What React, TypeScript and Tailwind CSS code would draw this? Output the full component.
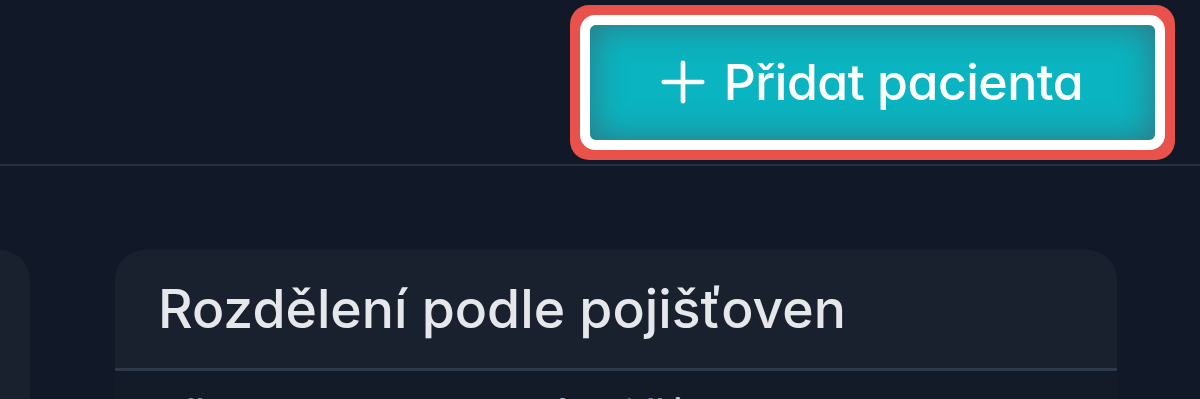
import { Plus } from "lucide-react";

const font = "font-['Inter','Noto_Sans',sans-serif] [font-feature-settings:'cv11']";

export default function App() {
  return (
    <div className={`h-[399px] w-[1200px] overflow-hidden bg-[#111827] ${font}`}>
      {/* Header */}
      <header className="flex h-[166px] items-center justify-end border-b-2 border-[#263041] pr-[45px]">
        <button className="flex h-[115px] w-[565px] items-center justify-center gap-[8px] rounded-[6px] bg-[#0ab4c0] text-white shadow-[inset_0_0_34px_rgba(55,105,115,0.85),0_0_0_10px_#ffffff,0_0_0_20px_#e8524a]">
          <Plus className="-ml-[12px] h-[66px] w-[66px]" strokeWidth={1.7} />
          <span className="text-[50px] font-medium leading-none tracking-[-0.01em]">Přidat pacienta</span>
        </button>
      </header>

      {/* Content */}
      <main className="-ml-[370px] grid grid-cols-[400px_1002px] gap-[85px] pt-[84px]">
        <div className="h-[400px] rounded-[30px] bg-[#19212f]" />
        <section className="rounded-[30px] bg-[#19212f]">
          <div className="flex h-[121px] items-center border-b-[3px] border-[#2e3949] px-[43px]">
            <h2 className="text-[53.5px] font-medium leading-none text-[#e5e7eb]">Rozdělení podle pojišťoven</h2>
          </div>
          <div className="bg-[#131b29] px-[43px] pt-[24px]">
            <div className="flex items-center justify-between text-[40px] font-medium leading-none text-[#cbd5e1]">
              <span>Všeobecná zdravotní pojišťovna</span>
              <span>1 248</span>
            </div>
          </div>
        </section>
      </main>
    </div>
  );
}
